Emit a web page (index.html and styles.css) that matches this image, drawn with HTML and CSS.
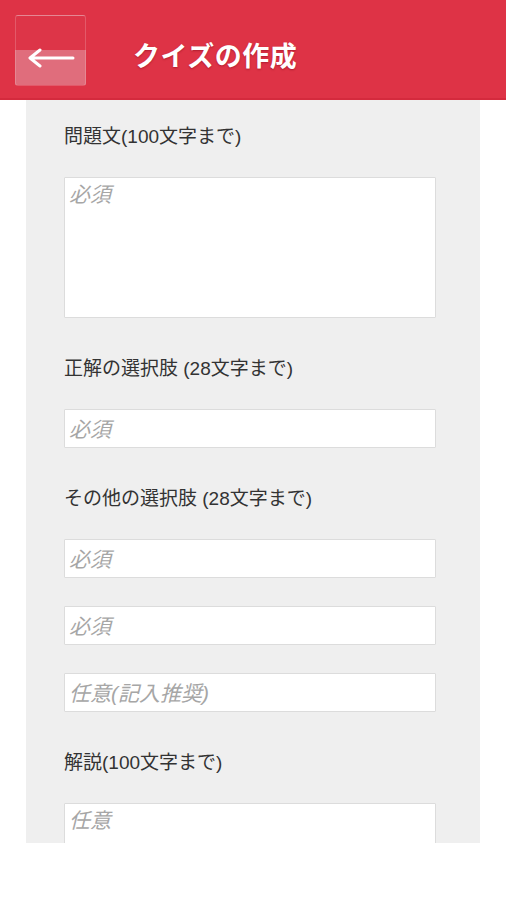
FILE: index.html
```html
<!DOCTYPE html>
<html lang="ja">
<head>
    <meta charset="UTF-8">
    <meta name="viewport" content="width=device-width, initial-scale=1.0">
    <title>クイズの作成</title>
    <link rel="stylesheet" href="styles.css">
</head>
<body>
    <header class="app-bar">
        <button class="back-btn" type="button" aria-label="戻る">
            <svg width="48" height="20" viewBox="0 0 48 20">
                <path d="M46 10H4M13 2L3 10l10 8" fill="none" stroke="#fff" stroke-width="3" stroke-linecap="round" stroke-linejoin="round"/>
            </svg>
        </button>
        <h1>クイズの作成</h1>
    </header>

    <main class="form-panel">
        <section class="field">
            <label class="field-label">問題文(100文字まで)</label>
            <textarea class="text-box tall" placeholder="必須"></textarea>
        </section>

        <section class="field">
            <label class="field-label">正解の選択肢 (28文字まで)</label>
            <input class="text-box" type="text" placeholder="必須">
        </section>

        <section class="field">
            <label class="field-label">その他の選択肢 (28文字まで)</label>
            <input class="text-box" type="text" placeholder="必須">
            <input class="text-box" type="text" placeholder="必須">
            <input class="text-box" type="text" placeholder="任意(記入推奨)">
        </section>

        <section class="field">
            <label class="field-label">解説(100文字まで)</label>
            <textarea class="text-box tall" placeholder="任意"></textarea>
        </section>
    </main>
</body>
</html>
```

FILE: styles.css
```css
:root {
    --red-color: #de3346;
    --panel-color: #efefef;
    --text-color: #333333;
    --hint-color: #a6a6a6;
}

body {
    font-family: "Liberation Sans", "Noto Sans CJK JP", sans-serif;
    margin: 0;
    padding: 0;
    background-color: #ffffff;
    color: var(--text-color);
}

.app-bar {
    display: flex;
    align-items: flex-start;
    height: 98px;
    padding: 15px 15px 0;
    box-sizing: border-box;
    height: 100px;
    background-color: var(--red-color);
    border-bottom: 2px solid #d42a3d;
}

.back-btn {
    display: flex;
    align-items: center;
    justify-content: center;
    width: 71px;
    height: 71px;
    padding: 14px 0 0;
    border: 1px solid rgba(255, 255, 255, 0.18);
    border-radius: 3px;
    background: linear-gradient(to bottom, #dd3548 0, #dd3548 50%, #e06d7c 50%, #e06d7c 100%);
    cursor: pointer;
}

.app-bar h1 {
    margin: 22px 0 0 47px;
    font-size: 27px;
    line-height: 40px;
    font-weight: bold;
    color: #ffffff;
    letter-spacing: 0.5px;
    text-shadow: 0 1px 2px rgba(120, 0, 20, 0.45);
}

.form-panel {
    display: flex;
    flex-direction: column;
    gap: 39px;
    width: 454px;
    height: 743px;
    margin-left: 26px;
    padding: 25px 0 0 38px;
    box-sizing: border-box;
    background-color: var(--panel-color);
    overflow: hidden;
}

.field {
    display: flex;
    flex-direction: column;
    gap: 28px;
}

.field-label {
    font-size: 19px;
    line-height: 24px;
    height: 24px;
}

.text-box {
    flex-shrink: 0;
    width: 372px;
    height: 39px;
    box-sizing: border-box;
    margin: 0;
    padding: 2px 4px 0;
    border: 1px solid #dcdcdc;
    border-radius: 1px;
    background-color: #ffffff;
    font-family: inherit;
    font-size: 21px;
    color: var(--text-color);
    outline: none;
}

.text-box::placeholder {
    color: var(--hint-color);
    font-style: italic;
}

.tall {
    height: 141px;
    padding-top: 0;
    resize: none;
}
```
